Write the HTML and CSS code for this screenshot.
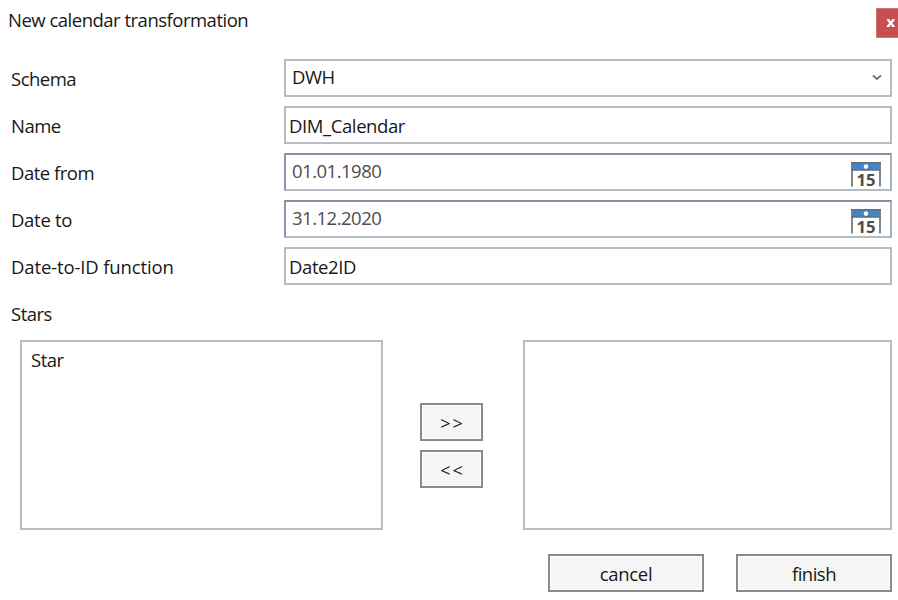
FILE: index.html
```
<!DOCTYPE html>
<html lang="en">
<head>
<meta charset="utf-8">
<title>New calendar transformation</title>
<link rel="stylesheet" href="styles.css">
</head>
<body>
<main class="dialog">
  <header class="titlebar">
    <h1><span class="t title">New calendar transformation</span></h1>
    <button class="close" aria-label="Close"><svg width="22" height="30" viewBox="0 0 22 30"><path d="M11.8 11.7 17.6 18.5M17.6 11.7 11.8 18.5" stroke="#fff" stroke-width="2.2" fill="none"/><path d="M10.8 11.8h3M15.8 11.8h3M10.8 18.4h3M15.8 18.4h3" stroke="#fff" stroke-width="1.1"/></svg></button>
  </header>
  <section class="form">
    <div class="row"><label><span class="t">Schema</span></label><div class="field inset"><span class="t">DWH</span><svg class="chevron" width="10" height="8" viewBox="0 0 10 8"><path d="M1 1.5 5 5 9 1.5" fill="none" stroke="#737373" stroke-width="1.9"/></svg></div></div>
    <div class="row"><label><span class="t">Name</span></label><div class="field"><span class="t name">DIM_Calendar</span></div></div>
    <div class="row"><label><span class="t">Date from</span></label><div class="field inset date"><span class="t">01.01.1980</span><svg class="cal" width="30" height="30" viewBox="0 0 30 30"><path d="M1 24.5V2h28v22.5" fill="#fff" stroke="#858585" stroke-width="2"/><path d="M1 1h28v7H1z" fill="#4385c6"/><path d="M0 .8h30M0 8h30" stroke="#666f78" stroke-width="1.4"/><circle cx="15" cy="4.6" r="2.3" fill="#fff"/><text x="5.5" y="24" textLength="19" lengthAdjust="spacingAndGlyphs">15</text></svg></div></div>
    <div class="row"><label><span class="t to">Date to</span></label><div class="field inset date"><span class="t">31.12.2020</span><svg class="cal" width="30" height="30" viewBox="0 0 30 30"><path d="M1 24.5V2h28v22.5" fill="#fff" stroke="#858585" stroke-width="2"/><path d="M1 1h28v7H1z" fill="#4385c6"/><path d="M0 .8h30M0 8h30" stroke="#666f78" stroke-width="1.4"/><circle cx="15" cy="4.6" r="2.3" fill="#fff"/><text x="5.5" y="24" textLength="19" lengthAdjust="spacingAndGlyphs">15</text></svg></div></div>
    <div class="row"><label><span class="t func">Date-to-ID function</span></label><div class="field"><span class="t name">Date2ID</span></div></div>
    <div class="row"><label><span class="t">Stars</span></label></div>
  </section>
  <section class="lists">
    <div class="list"><span class="t">Star</span></div>
    <div class="movers"><button class="btn move">&gt;&gt;</button><button class="btn move">&lt;&lt;</button></div>
    <div class="list right"></div>
  </section>
  <footer><button class="btn"><span class="t cancel">cancel</span></button><button class="btn"><span class="t">finish</span></button></footer>
</main>
</body>
</html>
```
FILE: styles.css
```
* { box-sizing: border-box; }
body { margin: 0; background: #fff; color: #181818; font: 18.5px/26px "Open Sans", "Noto Sans", sans-serif; }
.dialog { width: 898px; height: 600px; overflow: hidden; }
.t { display: inline-block; letter-spacing: -0.5px; white-space: nowrap; }
.name { letter-spacing: -0.4px; }
.to { letter-spacing: -0.3px; }
.func { letter-spacing: -0.13px; }
.cancel { letter-spacing: -0.3px; }
.titlebar { display: flex; justify-content: space-between; height: 59px; padding: 8px 0 0 8px; }
h1 { margin: -1px 0 0; font: inherit; }
.close { width: 22px; height: 30px; padding: 0; border: 1px solid #d3787a; border-right: 0; background: #c54f52; }
.close svg { display: block; margin: -1px; }
.form { padding: 0 6px 0 11px; }
.row { display: flex; height: 47px; }
label { width: 273px; padding-top: 7px; }
.field { display: flex; justify-content: space-between; flex: 1; height: 38px; padding: 5px 8px 0 3px; border: 2px solid #bbbbc0; }
.inset { padding: 3px 8px 0 6px; }
.date { padding-right: 9px; border-color: #8292a2 #a4b1be #b0bbc6 #8999a9; color: #4d4d4d; }
.chevron { margin-top: 10px; }
.cal { margin-top: 4px; }
.cal text { font: bold 16px "Open Sans", sans-serif; fill: #4d4d4d; }
.lists { display: flex; height: 214px; margin-top: -1px; padding: 0 6px 0 20px; }
.list { width: 363px; height: 190px; padding: 5px 9px; border: 2px solid #bbbbc0; }
.right { width: 369px; }
.movers { display: flex; flex-direction: column; gap: 9px; width: 140px; padding: 63px 0 0 37px; }
.btn { width: 156px; height: 38px; padding: 2px 0 0; border: 2px solid #8a8a8a; background: #f5f5f5; box-shadow: inset 0 0 0 1px #fff; font: inherit; color: #181818; }
.move { width: 63px; padding-left: 2px; font-size: 18px; font-weight: 500; letter-spacing: 2px; }
footer { display: flex; justify-content: flex-end; gap: 32px; padding-right: 6px; }
```
